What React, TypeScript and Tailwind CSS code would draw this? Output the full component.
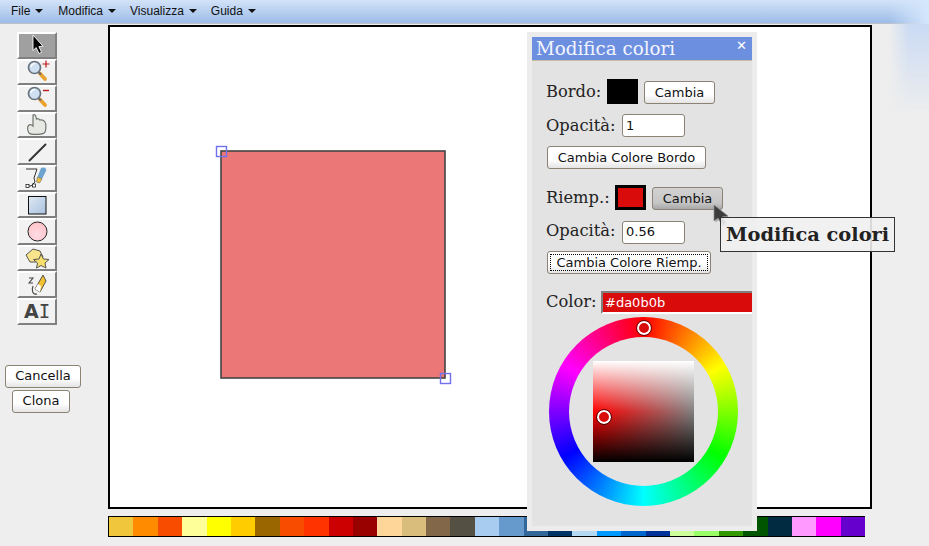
import React from 'react';

const serif = 'font-["DejaVu_Serif",serif]';
const sans = 'font-["DejaVu_Sans",sans-serif]';

const palette = [
  '#f0c73c', '#ff8c00', '#f84c00', '#ffff99', '#ffff00', '#ffcc00', '#996600', '#f84c00',
  '#ff3300', '#cc0000', '#990000', '#ffd699', '#d9bd7d', '#836749', '#555044', '#a8ccf0',
  '#6699cc', '#336699', '#003366', '#b3d9f5', '#0099ff', '#0066cc', '#003399', '#ccff99',
  '#99ff66', '#339900', '#005500', '#002b40', '#ff99ff', '#ff00ff', '#6600cc',
];

const Caret = () => <span className="ml-[5px] inline-block h-0 w-0 border-x-[4px] border-t-[4px] border-x-transparent border-t-[#111]" />;

const Menu = ({ label, className }: { label: string; className: string }) => (
  <div className={`flex items-center ${className}`}>
    <span>{label}</span>
    <Caret />
  </div>
);

const Lens = () => (
  <>
    <line x1="15" y1="13.5" x2="20" y2="19" stroke="#eaa22e" strokeWidth="3.8" strokeLinecap="round" />
    <line x1="13.5" y1="12" x2="16" y2="14.5" stroke="#6c6c6c" strokeWidth="2.2" />
    <circle cx="9.5" cy="7.5" r="6" fill="#cfe0f2" stroke="#68727c" strokeWidth="1.7" />
    <path d="M6 7 a4 4 0 0 1 4 -3.4" fill="none" stroke="#fff" strokeWidth="1.4" />
  </>
);

const icons: React.ReactNode[] = [
  <path key="a" d="M8 2 L8 17.5 L11.2 14.6 L14 20.5 L16.6 19.3 L13.9 13.6 L18 13.2 Z" fill="#000" stroke="#fff" strokeWidth="0.9" />,
  <g key="b"><Lens /><path d="M21 0.5 v7 M17.5 4 h7" stroke="#c01818" strokeWidth="1.2" /></g>,
  <g key="c"><Lens /><path d="M18 4.5 h6" stroke="#c01818" strokeWidth="1.4" /></g>,
  <path key="d" d="M8 2 C10 1 11 3 11.5 6 C13 5 14 6 15 7 C17 6.5 19 7 20 9 C21.5 11 21 17 20 19 C19 22 6 22 4 20 C2.5 18 2 14 3.5 12.5 C5 11 7 12 8 13 Z" fill="#e6e9e3" stroke="#6f746e" strokeWidth="1.2" />,
  <line key="e" x1="4.5" y1="20.5" x2="20.5" y2="4.5" stroke="#333" strokeWidth="1.9" strokeLinecap="round" />,
  <g key="f">
    <path d="M1 3 H12 L9 12 L10 16 L6 20 H3" fill="none" stroke="#333" strokeWidth="1" />
    <rect x="1" y="18.5" width="3" height="3" fill="#fff" stroke="#222" strokeWidth="0.8" />
    <rect x="7.5" y="18" width="3" height="3" fill="#fff" stroke="#222" strokeWidth="0.8" />
    <path d="M16 2 C19 0.5 22 2.5 21 5 L17 13 L12.5 11 Z" fill="#6fa3cf" />
    <path d="M12.5 11 L17 13 L14.5 17 L11.5 16 Z" fill="#f0c040" stroke="#555" strokeWidth="0.5" />
  </g>,
  <g key="g">
    <defs><linearGradient id="sq" x1="0" y1="0" x2="1" y2="1"><stop offset="0" stopColor="#dfe8f3" /><stop offset="1" stopColor="#a9c2de" /></linearGradient></defs>
    <rect x="3.5" y="3.5" width="17.5" height="17.5" fill="url(#sq)" stroke="#111" strokeWidth="1" />
  </g>,
  <g key="h">
    <defs><radialGradient id="ci" cx="0.45" cy="0.7" r="0.7"><stop offset="0" stopColor="#ffdce2" /><stop offset="1" stopColor="#ffc2ca" /></radialGradient></defs>
    <circle cx="12.5" cy="12.5" r="9.5" fill="url(#ci)" stroke="#222" strokeWidth="1" />
  </g>,
  <g key="i">
    <path d="M1 9 L8 3 L15 5 L18 11 L11 16 L5 16 Z" fill="#f8e48a" stroke="#555" strokeWidth="1" />
    <path d="M16 8 L18.5 13 L24 13.5 L20 17 L21 22 L16 19.5 L11.5 22 L12.5 17 L8.5 13.5 L14 13 Z" fill="#f8de6a" stroke="#555" strokeWidth="1" />
  </g>,
  <g key="j">
    <path d="M4 5 H8 L4 10 H8 M8 13 C6 18 8 22 12 21" fill="none" stroke="#444" strokeWidth="1.1" />
    <path d="M18 2 L21 8 L15 19 L10 16 Z" fill="#f2c230" stroke="#444" strokeWidth="0.9" />
    <path d="M10 16 L13 11 L16 13 L15 19 Z" fill="#fff" />
  </g>,
];

const ToolButton = ({ active, children }: { active?: boolean; children: React.ReactNode }) => (
  <div className={`flex h-[26.6px] w-10 items-center justify-center border-2 border-b-[#808080] border-l-white border-r-[#808080] border-t-white ${active ? 'bg-[#a0a0a0]' : 'bg-[#f2f2f2]'}`}>
    {children}
  </div>
);

const Btn = ({ className = '', hover, children }: { className?: string; hover?: boolean; children: React.ReactNode }) => (
  <div className={`flex h-[23px] items-center justify-center rounded-[3px] border border-[#8b8475] text-[13px] text-[#111] ${sans} ${hover ? 'bg-[linear-gradient(#d2d2d2,#c6c6c6_70%,#a8a8a8)]' : 'bg-[linear-gradient(#fff,#fff_60%,#e4e4e4)]'} ${className}`}>
    {children}
  </div>
);

const Field = ({ value }: { value: string }) => (
  <div className={`flex h-[23px] w-[63px] items-center rounded-[3px] border border-[#8b8475] bg-white pl-[3px] text-[13px] text-[#111] ${sans}`}>{value}</div>
);

const Marker = ({ className }: { className: string }) => (
  <div className={`absolute h-[14px] w-[14px] rounded-full border-2 border-white bg-[#da0b0b] outline outline-1 outline-black/60 ${className}`} />
);

const ColorWheel = () => (
  <div className="relative ml-[17px] mt-[3px] flex h-[189px] w-[189px] items-center justify-center rounded-full bg-[conic-gradient(#f00,#ff0,#0f0,#0ff,#00f,#f0f,#f00)]">
    <div className="flex h-[149px] w-[149px] items-center justify-center rounded-full bg-[#e3e3e3]">
      <div className="relative h-[101px] w-[101px] bg-[linear-gradient(#fff,rgba(255,255,255,0)_50%,rgba(0,0,0,0)_50%,#000),linear-gradient(to_right,#f00,#808080)]">
        <Marker className="left-[4px] top-[49px]" />
      </div>
    </div>
    <Marker className="left-[88px] top-[4px]" />
  </div>
);

const ColorPanel = () => (
  <div className="absolute left-[417px] top-[5px] h-[499px] w-[230px] border-[5px] border-[#ececec] bg-[#e3e3e3]">
    <div className={`flex h-[24px] items-center justify-between border-b border-[#c8c0a0] bg-[#6d8fe0] pl-[4px] pr-[5px] pt-[2px] text-[18.3px] leading-none text-[#f2f5ff] ${serif}`}>
      <span>Modifica colori</span>
      <span className={`-mt-[8px] text-[13px] font-bold text-white ${sans}`}>✕</span>
    </div>
    <div className={`pl-[14px] text-[16.3px] text-[#222] ${serif}`}>
      <div className="mt-[18px] flex h-[25px] items-center">
        <span className="mt-[2px] w-[61px]">Bordo:</span>
        <div className="h-[25px] w-[31px] bg-black" />
        <Btn className="ml-[6px] mt-[2px] w-[71px]">Cambia</Btn>
      </div>
      <div className="mt-[9px] flex items-center">
        <span className="mt-[1px] w-[76px]">Opacità:</span>
        <Field value="1" />
      </div>
      <Btn className="ml-px mt-[8px] w-[159px]">Cambia Colore Bordo</Btn>
      <div className="mt-[16px] flex h-[25px] items-center">
        <span className="w-[69px]">Riemp.:</span>
        <div className="h-[25px] w-[31px] border-[3px] border-black bg-[#da0b0b]" />
        <Btn hover className="ml-[6px] mt-[2px] w-[71px]">Cambia</Btn>
      </div>
      <div className="mt-[10px] flex items-center">
        <span className="-mt-[1px] w-[76px]">Opacità:</span>
        <Field value="0.56" />
      </div>
      <Btn className="ml-px mt-[7px] w-[164px] p-[2px]">
        <div className="flex h-full w-full items-center justify-center border border-dotted border-black">Cambia Colore Riemp.</div>
      </Btn>
      <div className="mt-[17px] flex h-[23px] items-center">
        <span className="-mt-[1px] w-[55px]">Color:</span>
        <div className={`flex h-[23px] flex-1 items-center border-b-2 border-l-2 border-t-2 border-b-white border-l-[#808080] border-t-[#808080] bg-[#da0b0b] pl-[2px] text-[13px] text-white ${sans}`}>#da0b0b</div>
      </div>
    </div>
    <ColorWheel />
  </div>
);

export default function App() {
  return (
    <div className="relative flex h-[546px] w-[929px] flex-col overflow-hidden bg-[#eeeeee]">
      <div className='flex h-6 items-center border-b border-[#b8c0c8] bg-[linear-gradient(#d3e3f8,#9dbce8)] pb-[2px] font-["Liberation_Sans",sans-serif] text-xs text-[#111]'>
        <Menu label="File" className="ml-[11px]" />
        <Menu label="Modifica" className="ml-[15px]" />
        <Menu label="Visualizza" className="ml-[14px]" />
        <Menu label="Guida" className="ml-[14px]" />
      </div>

      <div className="flex">
        <div className="flex w-[108px] flex-col">
          <div className="ml-[17px] mt-2 flex flex-col">
            {icons.map((icon, i) => (
              <ToolButton key={i} active={i === 0}>
                <svg width="25" height="24" viewBox="0 0 25 24">{icon}</svg>
              </ToolButton>
            ))}
            <ToolButton>
              <span className={`text-[19px] font-bold leading-none text-[#444] ${sans}`}>
                A<span className='font-["DejaVu_Sans_Mono",monospace] font-normal'>I</span>
              </span>
            </ToolButton>
          </div>
          <Btn className="ml-[5px] mt-[40px] w-[76px]">Cancella</Btn>
          <Btn className="ml-3 mt-[2px] w-[58px]">Clona</Btn>
        </div>

        <div className="flex flex-col">
          <div className="relative mt-px h-[484px] w-[764px] border-2 border-black bg-white">
            <svg width="760" height="480" className="block">
              <rect x="111" y="124" width="224" height="227" fill="#ec7777" stroke="#444" strokeWidth="1.6" />
              <rect x="106.5" y="119.5" width="10" height="10" fill="none" stroke="#7070f0" strokeWidth="1.4" />
              <rect x="330.5" y="346.5" width="10" height="10" fill="none" stroke="#7070f0" strokeWidth="1.4" />
            </svg>
            <ColorPanel />
          </div>
          <div className="mt-[7px] flex h-[21px] w-[757px] border-b border-l border-t border-black">
            {palette.map((color, i) => (
              <div key={i} className="h-full w-[24.4px]" style={{ backgroundColor: color }} />
            ))}
          </div>
        </div>
      </div>

      <div className="absolute right-0 top-6 h-[90px] w-[40px] bg-[linear-gradient(rgba(190,212,245,0.75),rgba(238,238,238,0))] [mask-image:linear-gradient(to_right,transparent,black_50%)]" />
      <div className="absolute right-0 top-0 h-6 w-[40px] bg-[linear-gradient(to_right,rgba(215,232,252,0),#d5e7fc)]" />

      <svg width="26" height="30" viewBox="0 0 26 30" className="absolute left-[709px] top-[202px]">
        <path d="M5 3 L5 19 L9 16 L13 23 L17 21 L13 15 L19 14 Z" fill="#000" opacity="0.25" transform="translate(1.5 1.5)" />
        <path d="M5 3 L5 19 L9 16 L13 23 L17 21 L13 15 L19 14 Z" fill="#3c3c3c" stroke="#8a8a8a" strokeWidth="0.8" />
      </svg>
      <div className={`absolute left-[720px] top-[217px] flex h-[35px] w-[175px] items-center border border-[#333] bg-[#f0f0f0]/90 pl-[5px] text-[19.4px] font-bold text-[#222] ${serif}`}>
        Modifica colori
      </div>
    </div>
  );
}
